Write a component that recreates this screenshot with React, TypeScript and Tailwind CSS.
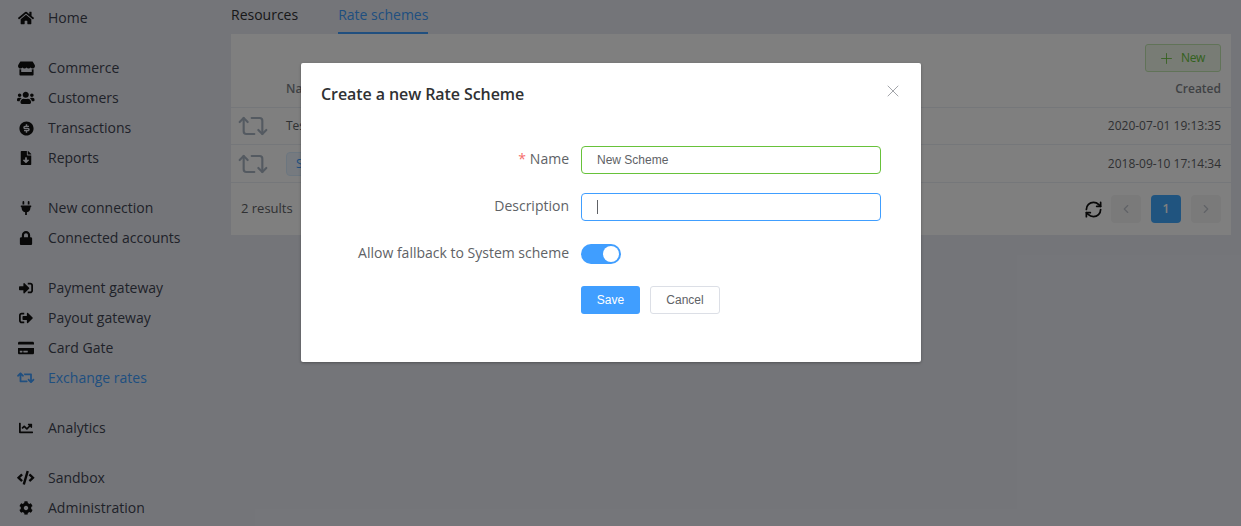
import React from 'react';
import { X, Plus, ChevronLeft, ChevronRight, Repeat2, RefreshCw } from 'lucide-react';
import {
  FaHome, FaStore, FaUsers, FaFileDownload, FaPlug, FaLock, FaSignInAlt, FaSignOutAlt,
  FaCreditCard, FaRetweet, FaChartLine, FaCode, FaCog,
} from 'react-icons/fa';
import { RiMoneyDollarCircleFill } from 'react-icons/ri';

const menuGroups = [
  [{ label: 'Home', icon: FaHome, size: 16 }],
  [
    { label: 'Commerce', icon: FaStore, size: 17 },
    { label: 'Customers', icon: FaUsers, size: 17.5 },
    { label: 'Transactions', icon: RiMoneyDollarCircleFill, size: 17 },
    { label: 'Reports', icon: FaFileDownload, size: 14 },
  ],
  [
    { label: 'New connection', icon: FaPlug, size: 14 },
    { label: 'Connected accounts', icon: FaLock, size: 14 },
  ],
  [
    { label: 'Payment gateway', icon: FaSignInAlt, size: 14 },
    { label: 'Payout gateway', icon: FaSignOutAlt, size: 14 },
    { label: 'Card Gate', icon: FaCreditCard, size: 16 },
    { label: 'Exchange rates', icon: FaRetweet, size: 17.5, active: true },
  ],
  [{ label: 'Analytics', icon: FaChartLine, size: 14 }],
  [
    { label: 'Sandbox', icon: FaCode, size: 17.5 },
    { label: 'Administration', icon: FaCog, size: 14 },
  ],
];

const rows = [
  { name: 'Test', created: '2020-07-01 19:13:35', h: 'h-[37px]' },
  { name: 'System', created: '2018-09-10 17:14:34', h: 'h-[38px]', tag: true },
];

export default function App() {
  return (
    <div className="relative flex h-[526px] w-[1241px] overflow-hidden bg-[#e9ebf3] font-['Open_Sans',sans-serif] text-[#303133]">
      <aside className="flex w-[231px] shrink-0 flex-col gap-5 pt-[3px]">
        {menuGroups.map((group, i) => (
          <div key={i}>
            {group.map(item => (
              <div
                key={item.label}
                className={`flex h-[30px] items-center text-sm ${item.active ? 'text-[#409eff]' : 'text-[#3f4452]'}`}
              >
                <span className={`ml-4 mr-3 flex w-5 justify-center ${item.active ? 'text-[#409eff]' : 'text-[#111]'}`}>
                  <item.icon size={item.size} />
                </span>
                <span>{item.label}</span>
              </div>
            ))}
          </div>
        ))}
      </aside>

      <main className="flex-1 pr-[10px]">
        <div className="flex h-[34px] gap-10 text-sm">
          <div className="pt-[5px]">Resources</div>
          <div className="border-b-2 border-[#409eff] pt-[5px] text-[#409eff]">Rate schemes</div>
        </div>

        <section className="h-[201px] bg-white">
          <div className="flex justify-end px-[10px] pt-[10px]">
            <button className="flex h-[28px] w-[76px] items-center gap-[6px] rounded-[3px] border border-[#c2e7b0] bg-[#f0f9eb] pl-[12px] text-xs tracking-[-0.4px] text-[#67c23a]">
              <Plus size={17} strokeWidth={1.2} />
              New
            </button>
          </div>
          <div className="flex h-[36px] items-center justify-between border-b border-[#ebeef5] pb-[2px] pl-[55px] pr-[10px] text-xs font-semibold text-[#808389]">
            <span>Name</span>
            <span>Created</span>
          </div>
          {rows.map(row => (
            <div key={row.name} className={`flex ${row.h} items-center justify-between border-b border-[#ebeef5] pl-[6px] pr-[10px] text-xs text-[#606266]`}>
              <div className="flex items-center gap-[17px]">
                <Repeat2 size={32} strokeWidth={1.6} className="text-[#a8b4c2]" />
                {row.tag ? (
                  <span className="flex h-6 items-center rounded border border-[#d9ecff] bg-[#ecf5ff] px-[9px] text-[#409eff]">{row.name}</span>
                ) : (
                  <span>{row.name}</span>
                )}
              </div>
              <span>{row.created}</span>
            </div>
          ))}
          <div className="flex items-center justify-between pl-[10px] pr-[10px] pt-[12px]">
            <span className="text-[13px] text-[#606266]">2 results</span>
            <div className="flex items-center gap-[10px]">
              <RefreshCw size={19} strokeWidth={2.2} className="-mr-[2px] text-[#111]" />
              <span className="flex h-7 w-[30px] items-center justify-center rounded-sm bg-[#f4f4f5] text-[#c0c4cc]">
                <ChevronLeft size={14} />
              </span>
              <span className="flex h-7 w-[30px] items-center justify-center rounded-sm bg-[#40a8ff] text-xs font-semibold text-white">
                1
              </span>
              <span className="flex h-7 w-[30px] items-center justify-center rounded-sm bg-[#f4f4f5] text-[#c0c4cc]">
                <ChevronRight size={14} />
              </span>
            </div>
          </div>
        </section>
      </main>

      <div className="absolute inset-0 bg-black/50 pl-[301px] pt-[63px]">
        <div className="relative h-[299px] w-[620px] rounded-[2px] bg-white shadow-[0_1px_3px_rgba(0,0,0,0.3)]">
          <h2 className="pl-5 pt-5 text-[16px] font-semibold leading-[22px] tracking-[-0.08px] text-[#303133]">Create a new Rate Scheme</h2>
          <X size={20} strokeWidth={1} className="absolute right-[18px] top-[18px] text-[#909399]" />

          <form className="mt-[41px] flex flex-col text-sm text-[#606266]">
            <div className="flex h-7 items-center">
              <label className="w-[280px] pb-[2px] pr-3 text-right">
                <span className="mr-1 text-[#f56c6c]">*</span>Name
              </label>
              <div className="flex h-7 w-[300px] items-center rounded border border-[#67c23a] px-[15px] font-['Liberation_Sans',sans-serif] text-xs">
                New Scheme
              </div>
            </div>
            <div className="mt-[19px] flex h-7 items-center">
              <label className="w-[280px] pb-[2px] pr-3 text-right">Description</label>
              <div className="flex h-7 w-[300px] items-center rounded border border-[#409eff] px-[15px]">
                <span className="h-[14px] w-px bg-[#606266]" />
              </div>
            </div>
            <div className="mt-[18px] flex h-7 items-center">
              <label className="w-[280px] pr-3 text-right">Allow fallback to System scheme</label>
              <span className="mt-[2px] flex h-5 w-10 items-center justify-end rounded-full bg-[#409eff] p-0.5">
                <span className="size-4 rounded-full bg-white" />
              </span>
            </div>
            <div className="mt-[19px] flex gap-[10px] pl-[280px] font-['Liberation_Sans',sans-serif] text-xs">
              <button type="button" className="h-7 w-[59px] rounded-[3px] bg-[#409eff] text-white">Save</button>
              <button type="button" className="h-7 w-[70px] rounded-[3px] border border-[#dcdfe6] bg-white text-[#606266]">Cancel</button>
            </div>
          </form>
        </div>
      </div>
    </div>
  );
}
